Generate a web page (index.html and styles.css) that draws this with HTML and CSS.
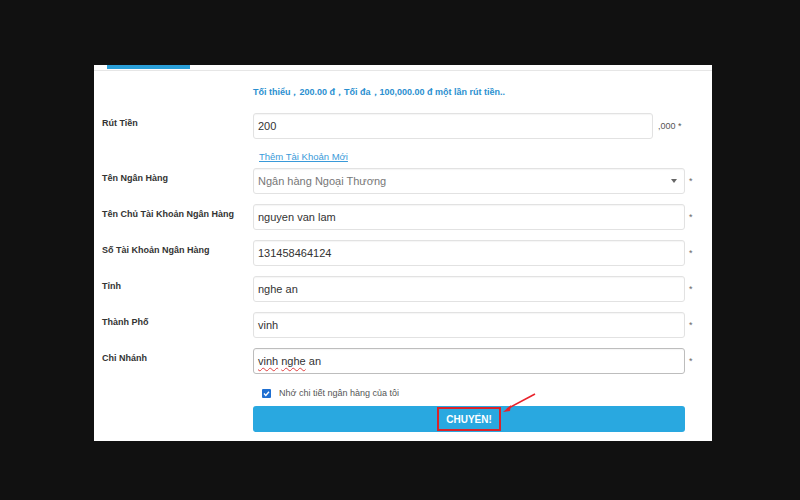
FILE: index.html
```html
<!DOCTYPE html>
<html lang="vi">
<head>
<meta charset="utf-8">
<title>Rút Tiền</title>
<link rel="stylesheet" href="styles.css">
</head>
<body>
<div class="panel">
  <div class="tabs"><span class="tab-active"></span></div>
  <div class="form">
    <div class="info">Tối thiểu，200.00 đ，Tối đa，100,000.00 đ một lần rút tiền..</div>
    <div class="row row-first">
      <div class="label">Rút Tiền</div>
      <div class="field field-short">200</div>
      <div class="suffix">,000 *</div>
    </div>
    <div class="link-row"><a class="link" href="#">Thêm Tài Khoản Mới</a></div>
    <div class="row row-select">
      <div class="label">Tên Ngân Hàng</div>
      <div class="field select"><span>Ngân hàng Ngoại Thương</span><span class="caret"></span></div>
      <div class="req">*</div>
    </div>
    <div class="row">
      <div class="label">Tên Chủ Tài Khoản Ngân Hàng</div>
      <div class="field">nguyen van lam</div>
      <div class="req">*</div>
    </div>
    <div class="row">
      <div class="label">Số Tài Khoản Ngân Hàng</div>
      <div class="field">131458464124</div>
      <div class="req">*</div>
    </div>
    <div class="row">
      <div class="label">Tỉnh</div>
      <div class="field">nghe an</div>
      <div class="req">*</div>
    </div>
    <div class="row">
      <div class="label">Thành Phố</div>
      <div class="field">vinh</div>
      <div class="req">*</div>
    </div>
    <div class="row">
      <div class="label">Chi Nhánh</div>
      <div class="field focused"><span><span class="spell">vinh</span> <span class="spell">nghe</span> an</span></div>
      <div class="req">*</div>
    </div>
    <div class="check-row">
      <span class="checkbox"><svg width="9" height="9" viewBox="0 0 9 9"><path d="M2 4.6 L3.8 6.4 L7 2.8" fill="none" stroke="#fff" stroke-width="1.4"/></svg></span>
      <span class="check-text">Nhớ chi tiết ngân hàng của tôi</span>
    </div>
    <div class="btn-row">
      <div class="button"><span class="btn-text">CHUYỂN!</span>
        <svg class="arrow" width="40" height="26" viewBox="0 0 40 26"><path d="M36 1 L8 16" stroke="#e8222b" stroke-width="1.6" fill="none"/><path d="M4 19 L12 12 L11 18 Z" fill="#e8222b"/></svg>
      </div>
    </div>
  </div>
</div>
</body>
</html>
```
FILE: styles.css
```css
html, body {
  margin: 0;
  padding: 0;
  background: #111111;
  width: 800px;
  height: 500px;
  overflow: hidden;
}
body {
  font-family: "Liberation Sans", Arial, sans-serif;
  color: #333;
}
.panel {
  margin: 65px 0 0 94px;
  width: 618px;
  height: 376px;
  background: #ffffff;
}
.tabs {
  height: 5px;
  border-bottom: 1px solid #e6e6e6;
  padding-left: 13px;
}
.tab-active {
  display: block;
  width: 83px;
  height: 4px;
  background: #2a9fd8;
}
.form {
  display: flex;
  flex-direction: column;
}
.info {
  margin: 14px 0 0 159px;
  height: 14px;
  line-height: 14px;
  font-size: 9px;
  font-weight: bold;
  color: #2b8fd0;
}
.row {
  display: flex;
  align-items: center;
  height: 26px;
  margin-top: 10px;
}
.row-first { margin-top: 14px; }
.row-select { margin-top: 4px; }
.label {
  width: 151px;
  padding-left: 8px;
  font-size: 9px;
  font-weight: bold;
  color: #333;
  position: relative;
  top: -3px;
}
.field {
  box-sizing: border-box;
  width: 432px;
  height: 26px;
  border: 1px solid #e2e2e2;
  border-radius: 3px;
  box-shadow: inset 0 1px 1px rgba(0,0,0,0.04);
  padding: 0 5px 0 4px;
  font-size: 11px;
  line-height: 24px;
  color: #333;
  display: flex;
  align-items: center;
}
.field-short { width: 400px; }
.select {
  color: #777;
  justify-content: space-between;
}
.caret {
  width: 0;
  height: 0;
  border-left: 3px solid transparent;
  border-right: 3px solid transparent;
  border-top: 4px solid #666;
  margin-right: 2px;
}
.focused {
  border-color: #bdbdbd;
  white-space: pre;
}
.spell {
  text-decoration: underline wavy #e04040;
  text-decoration-thickness: 1px;
  text-underline-offset: 2px;
}
.suffix {
  margin-left: 5px;
  font-size: 9px;
  color: #555;
}
.req {
  margin-left: 4px;
  font-size: 9px;
  color: #666;
}
.link-row {
  margin: 11px 0 0 165px;
  height: 14px;
  line-height: 14px;
  font-size: 9.5px;
}
.link {
  color: #3a9ad9;
  text-decoration: underline;
}
.check-row {
  margin: 12px 0 0 168px;
  height: 14px;
  display: flex;
  align-items: center;
}
.checkbox {
  width: 9px;
  height: 9px;
  border-radius: 1px;
  background: #1f6fd1;
  display: flex;
}
.check-text {
  margin-left: 8px;
  font-size: 9px;
  color: #555;
}
.btn-row {
  margin: 6px 0 0 159px;
}
.button {
  position: relative;
  width: 432px;
  height: 26px;
  border-radius: 3px;
  background: #29a8e0;
  display: flex;
  align-items: center;
  justify-content: center;
}
.btn-text {
  box-sizing: border-box;
  width: 64px;
  height: 24px;
  border: 2px solid #d9232a;
  color: #fff;
  font-weight: bold;
  font-size: 10px;
  display: flex;
  align-items: center;
  justify-content: center;
}
.arrow {
  position: absolute;
  left: 246px;
  top: -13px;
}
```
